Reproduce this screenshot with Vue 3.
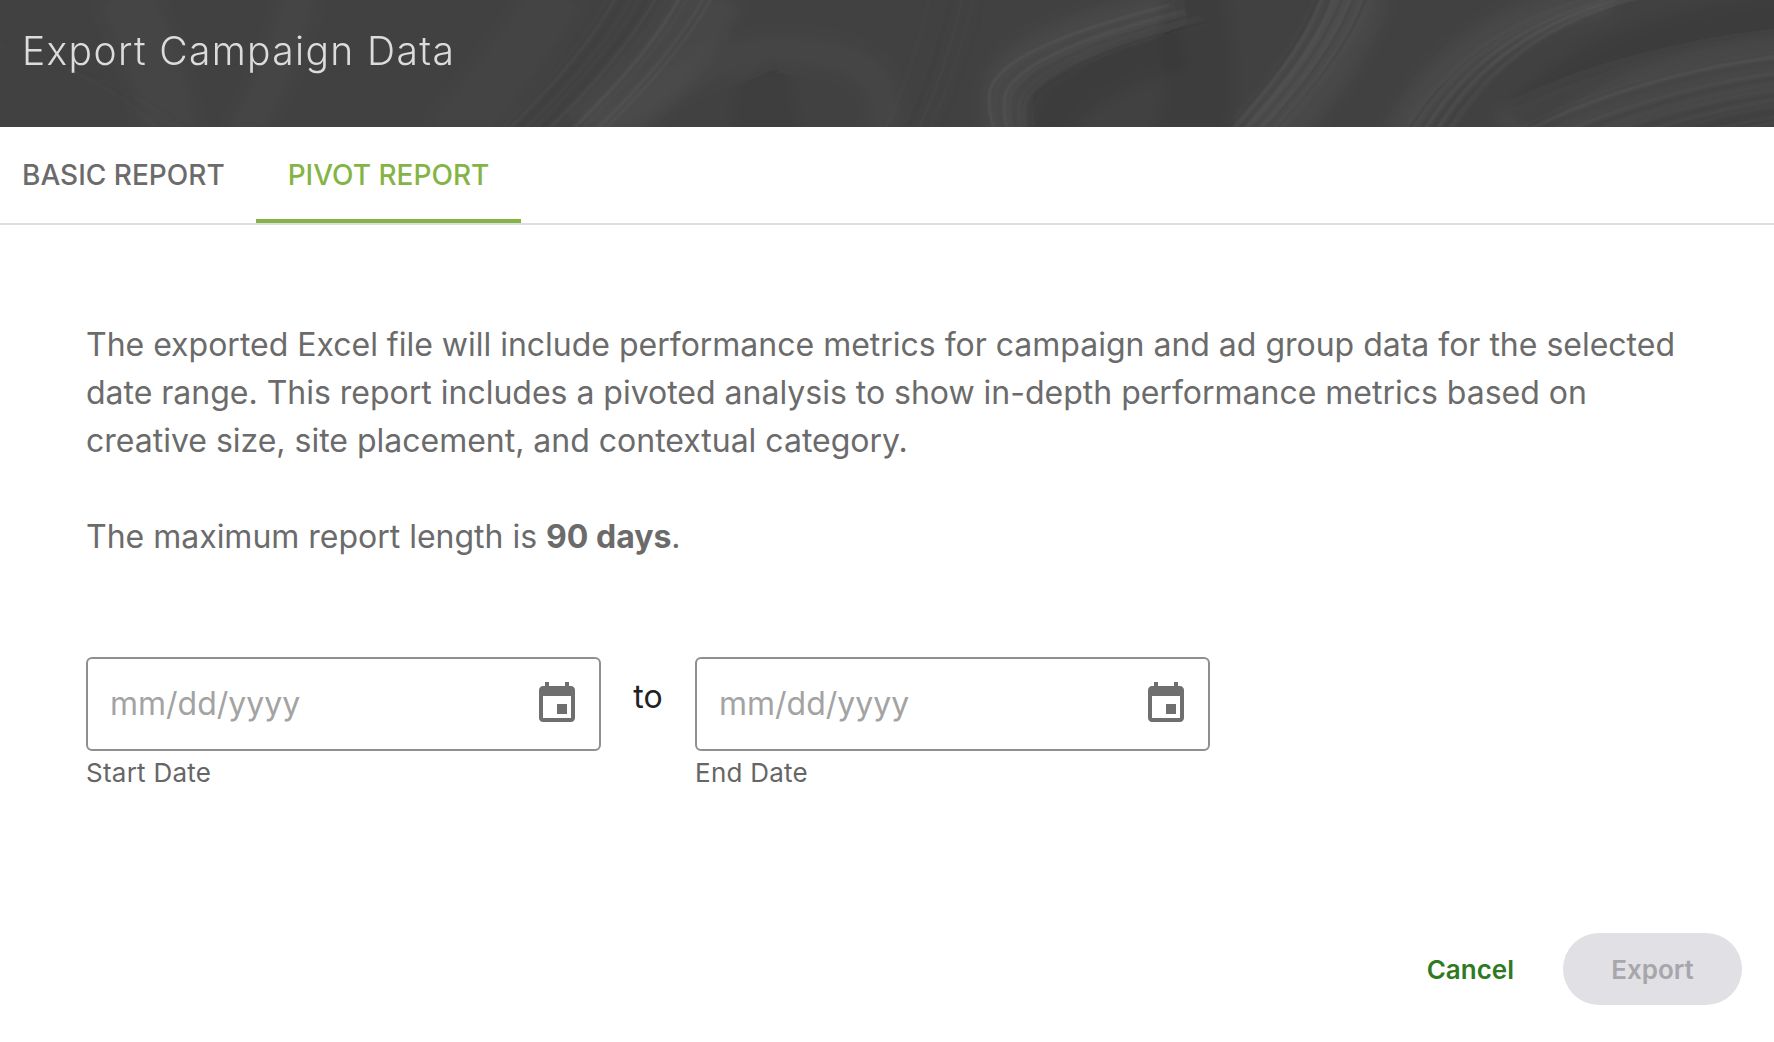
<script setup>
const bands = [
  { d: 'M120 -10 C 150 40, 165 90, 170 140', w: 60, o: 0.02 },
  { d: 'M300 -10 C 290 40, 270 90, 240 140', w: 40, o: 0.02 },
  { d: 'M710 -10 C 690 40, 640 90, 590 140', w: 70, o: 0.03 },
  { d: 'M560 -10 C 530 40, 490 90, 450 140', w: 60, o: 0.015 },
  { d: 'M1180 5 C 1100 25, 1010 50, 1003 90 C 1000 110, 1005 125, 1005 140', w: 40, o: 0.035 },
  { d: 'M590 130 C 660 90, 720 50, 780 50 C 850 50, 900 70, 880 140', w: 36, o: 0.02 },
  { d: 'M1360 -10 C 1345 40, 1310 85, 1265 140', w: 62, o: 0.035 },
  { d: 'M1610 -5 C 1510 15, 1440 60, 1400 140', w: 40, o: 0.035 },
  { d: 'M1790 70 C 1700 75, 1590 100, 1510 145', w: 70, o: 0.03 }
]
const darks = [
  { d: 'M1190 -10 C 1190 40, 1210 60, 1190 140', w: 70, o: 0.06 },
  { d: 'M1180 45 C 1120 60, 1040 95, 1050 140', w: 50, o: 0.07 },
  { d: 'M790 85 C 760 90, 760 110, 770 140', w: 60, o: 0.05 },
  { d: 'M1790 15 C 1700 25, 1580 50, 1520 130', w: 46, o: 0.07 }
]
const families = [
  { d: 'M-20 40 C 60 60, 120 90, 170 150', n: 8, dx: 12, dy: 4, o: 0.02 },
  { d: 'M715 -8 C 690 40, 650 85, 596 138', n: 14, dx: -8, dy: 0, o: 0.06 },
  { d: 'M1170 5 C 1090 25, 1000 55, 990 90 C 986 110, 995 125, 995 140', n: 10, dx: 5, dy: 2, o: 0.055 },
  { d: 'M930 -5 C 920 40, 905 90, 880 140', n: 6, dx: 11, dy: 0, o: 0.05 },
  { d: 'M1375 -5 C 1360 40, 1325 85, 1275 140', n: 16, dx: -4, dy: 0, o: 0.07 },
  { d: 'M1600 -5 C 1510 15, 1440 60, 1395 140', n: 14, dx: 4, dy: 0, o: 0.07 },
  { d: 'M1790 50 C 1690 60, 1570 95, 1500 140', n: 14, dx: 3, dy: 5, o: 0.07 }
]
const strokes = families.flatMap((f, fi) =>
  Array.from({ length: f.n }, (_, i) => ({
    key: `${fi}-${i}`,
    d: f.d,
    transform: `translate(${i * f.dx} ${i * f.dy})`,
    color: i % 3 === 2 ? '#000' : '#fff',
    opacity: f.o * (0.6 + 0.4 * Math.sin(i * 1.7 + fi)),
    width: 1.2 + ((i * 7 + fi) % 3) * 0.7
  }))
)
const fields = [
  { id: 'start', label: 'Start Date' },
  { id: 'end', label: 'End Date' }
]
</script>

<template>
  <div class="dialog">
    <header class="head">
      <svg class="grain" width="1774" height="127" viewBox="0 0 1774 127" aria-hidden="true">
        <defs>
          <filter id="soft" x="-10%" y="-50%" width="120%" height="200%"><feGaussianBlur stdDeviation="7" /></filter>
          <filter id="fine" x="-10%" y="-50%" width="120%" height="200%"><feGaussianBlur stdDeviation="0.8" /></filter>
        </defs>
        <g filter="url(#soft)" fill="none">
          <path v-for="(b, i) in bands" :key="i" :d="b.d" stroke="#fff" :stroke-width="b.w" :stroke-opacity="b.o" />
          <path v-for="(b, i) in darks" :key="i" :d="b.d" stroke="#000" :stroke-width="b.w" :stroke-opacity="b.o" />
        </g>
        <g filter="url(#fine)" fill="none">
          <path
            v-for="s in strokes"
            :key="s.key"
            :d="s.d"
            :transform="s.transform"
            :stroke="s.color"
            :stroke-opacity="s.opacity"
            :stroke-width="s.width"
          />
        </g>
      </svg>
      <h1 class="title">Export Campaign Data</h1>
    </header>

    <nav class="tabs">
      <button class="tab first">BASIC REPORT</button>
      <button class="tab active">PIVOT REPORT</button>
    </nav>

    <main class="body">
      <p class="text">
        The exported Excel file will include performance metrics for campaign and ad group data for the selected date range. This report includes a pivoted analysis to show in-depth performance metrics based on creative size, site placement, and contextual category.
      </p>
      <p class="text max">The maximum report length is <strong>90 days</strong>.</p>

      <div class="dates">
        <template v-for="(f, i) in fields" :key="f.id">
          <span v-if="i === 1" class="to">to</span>
          <div class="field">
            <div class="box">
              <input class="input" type="text" placeholder="mm/dd/yyyy" />
              <svg class="cal" width="48" height="48" viewBox="0 0 24 24" aria-hidden="true">
                <path fill="#6f6f6f" d="M17 12h-5v5h5v-5zM16 1v2H8V1H6v2H5c-1.11 0-1.99.9-1.99 2L3 19c0 1.1.89 2 2 2h14c1.1 0 2-.9 2-2V5c0-1.1-.9-2-2-2h-1V1h-2zm3 18H5V8h14v11z"/>
              </svg>
            </div>
            <label class="label">{{ f.label }}</label>
          </div>
        </template>
      </div>
    </main>

    <footer class="foot">
      <button class="cancel">Cancel</button>
      <button class="export" disabled>Export</button>
    </footer>
  </div>
</template>

<style>
html, body { margin: 0; background: #fff; }
</style>

<style scoped>
.dialog {
  display: flex;
  flex-direction: column;
  height: 1042px;
  font-family: Inter, "Liberation Sans", sans-serif;
  background: #fff;
  overflow: hidden;
}
.head {
  position: relative;
  height: 127px;
  flex: none;
  display: flex;
  align-items: center;
  padding: 0 0 27px 22px;
  box-sizing: border-box;
  background: #414141;
  overflow: hidden;
}
.grain { position: absolute; inset: 0; }
.title {
  position: relative;
  margin: 0;
  font-size: 39px;
  font-weight: 300;
  letter-spacing: 1.35px;
  color: #dcdcdc;
}
.tabs {
  display: flex;
  height: 98px;
  flex: none;
  box-sizing: border-box;
  border-bottom: 2px solid #dedede;
}
.tab {
  height: 96px;
  padding: 0;
  border: 0;
  background: none;
  font: 500 28px Inter, sans-serif;
  white-space: nowrap;
  color: #6b6b6b;
}
.tab.first { padding: 0 0 0 22px; width: 256px; text-align: left; }
.tab.active {
  color: #85b446;
  border-bottom: 4px solid #85b446;
  padding-top: 4px;
  width: 265px;
  text-align: center;
}
.body {
  flex: 1;
  padding: 96px 86px 0;
}
.text {
  margin: 0;
  font-size: 32px;
  line-height: 48px;
  letter-spacing: -0.01px;
  color: #6b6b6b;
}
.max { margin-top: 48px; }
.max strong { font-weight: 700; }
.dates {
  display: flex;
  align-items: flex-start;
  margin-top: 96px;
}
.field { width: 515px; }
.box {
  position: relative;
  box-sizing: border-box;
  height: 94px;
  border: 2px solid #8f8f8f;
  border-radius: 6px;
}
.input {
  box-sizing: border-box;
  width: 100%;
  height: 100%;
  padding: 0 80px 2px 22px;
  border: 0;
  outline: 0;
  background: none;
  font: 400 32px Inter, sans-serif;
  color: #6b6b6b;
}
.input::placeholder { color: #a3a3a3; opacity: 1; }
.cal { position: absolute; right: 18px; top: 21px; }
.label {
  display: block;
  margin-top: 6px;
  font-size: 26px;
  line-height: 32px;
  letter-spacing: 0.25px;
  color: #666;
}
.to {
  width: 94px;
  text-align: center;
  margin-top: 20px;
  font-size: 32px;
  line-height: 40px;
  color: #222;
}
.foot {
  display: flex;
  flex: none;
  align-items: center;
  justify-content: flex-end;
  gap: 49px;
  padding: 0 32px 37px;
}
.cancel, .export {
  border: 0;
  background: none;
  font: 600 26px Inter, sans-serif;
}
.cancel { color: #2f7a1f; padding: 0; }
.export {
  width: 179px;
  height: 72px;
  border-radius: 36px;
  background: #e0e0e5;
  color: #a6a6ab;
}
</style>
